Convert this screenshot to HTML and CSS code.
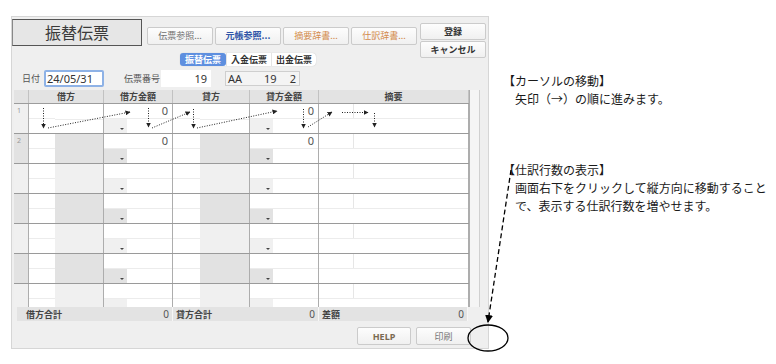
FILE: index.html
```html
<!DOCTYPE html>
<html lang="ja">
<head>
  <meta charset="UTF-8" />
  <title>振替伝票</title>
  <link rel="stylesheet" href="styles.css">
</head>
<body>
  <div class="page">
    <div class="window">
      <div class="top">
        <div class="top-main">
          <div class="title-row">
            <div class="title">振替伝票</div>
            <div class="ref-btns">
              <button class="btn ref gray">伝票参照...</button>
              <button class="btn ref blue">元帳参照...</button>
              <button class="btn ref orange">摘要辞書...</button>
              <button class="btn ref orange">仕訳辞書...</button>
            </div>
          </div>
          <div class="tabs">
            <span class="tab active">振替伝票</span>
            <span class="tab">入金伝票</span>
            <span class="tab">出金伝票</span>
          </div>
        </div>
        <div class="side-btns">
          <button class="btn side">登録</button>
          <button class="btn side">キャンセル</button>
        </div>
      </div>

      <div class="form-row">
        <span class="lbl lbl-date">日付</span>
        <div class="field date">24/05/31</div>
        <span class="lbl lbl-no">伝票番号</span>
        <div class="field no">19</div>
        <div class="field code"><span>AA</span><span class="c2">19</span><span class="c3">2</span></div>
      </div>

      <div class="grid-wrap">
        <div class="grid">
          <div class="thead cols">
            <div class="th"></div>
            <div class="th">借方</div>
            <div class="th">借方金額</div>
            <div class="th">貸方</div>
            <div class="th">貸方金額</div>
            <div class="th">摘要</div>
          </div>
          <div class="tbody" id="tbody"></div>
          <div class="tfoot">
            <div class="sum"><b>借方合計</b><span>0</span></div>
            <div class="sum"><b>貸方合計</b><span>0</span></div>
            <div class="sum"><b>差額</b><span>0</span></div>
          </div>
        </div>
        <div class="gutter"></div>
      </div>

      <div class="bottom-bar">
        <button class="btn foot help">HELP</button>
        <button class="btn foot">印刷</button>
      </div>
    </div>

    <div class="notes">
      <div class="note">
        <p>【カーソルの移動】</p>
        <p>　矢印（→）の順に進みます。</p>
      </div>
      <div class="note">
        <p>【仕訳行数の表示】</p>
        <p>　画面右下をクリックして縦方向に移動すること</p>
        <p>　で、表示する仕訳行数を増やせます。</p>
      </div>
    </div>
  </div>

  <svg class="callout" width="776" height="364" viewBox="0 0 776 364">
    <defs>
      <marker id="bigHead" markerWidth="8" markerHeight="10" refX="7" refY="5" orient="auto" markerUnits="userSpaceOnUse">
        <path d="M0,1 L8,5 L0,9 Z" fill="#000"/>
      </marker>
    </defs>
    <line x1="511" y1="170" x2="488" y2="322" stroke="#000" stroke-width="1.3" stroke-dasharray="5 3" marker-end="url(#bigHead)"/>
    <ellipse cx="488" cy="338" rx="20" ry="13" fill="none" stroke="#000" stroke-width="1.3"/>
  </svg>

  <script>
    const tbody = document.getElementById("tbody");

    const arrows = `
      <svg class="flow" width="455" height="29" viewBox="0 0 455 29">
        <defs>
          <marker id="tip" markerWidth="5" markerHeight="5" refX="4.5" refY="2.5" orient="auto" markerUnits="userSpaceOnUse">
            <path d="M0,0 L5,2.5 L0,5 Z" fill="#222"/>
          </marker>
        </defs>
        <g stroke="#222" stroke-width="1" stroke-dasharray="1 1.5" fill="none" marker-end="url(#tip)">
          <line x1="29.5" y1="4" x2="29.5" y2="24"/>
          <line x1="34" y1="24" x2="116" y2="8"/>
          <line x1="134.5" y1="4" x2="134.5" y2="23"/>
          <line x1="138" y1="24" x2="176" y2="8"/>
          <line x1="179.5" y1="5" x2="179.5" y2="24"/>
          <line x1="183" y1="24" x2="263" y2="7"/>
          <line x1="289.5" y1="5" x2="289.5" y2="24"/>
          <line x1="294" y1="23" x2="318" y2="8"/>
          <line x1="328" y1="8.5" x2="354" y2="8.5"/>
          <line x1="360.5" y1="9" x2="360.5" y2="23"/>
        </g>
      </svg>`;

    // build 7 journal rows (last one is cut off by the footer)
    for (let i = 1; i <= 7; i++) {
      const row = document.createElement("div");
      row.className = "row cols " + (i % 2 ? "odd" : "even") + (i === 1 ? " first" : "");
      const val = i <= 2 ? "0" : "";
      row.innerHTML = `
        <div class="num">${i <= 2 ? i : ""}</div>
        <div class="acct"><div class="w"><div class="sub"></div></div><div class="g"></div></div>
        <div class="amt"><div class="sub">${val}</div><div class="bot"><div class="drop"><i></i></div></div></div>
        <div class="acct cr"><div class="w"><div class="sub"></div></div><div class="g"></div></div>
        <div class="amt"><div class="sub">${val}</div><div class="bot"><div class="drop"><i></i></div></div></div>
        <div class="memo"><div class="sub"><div class="k"></div></div></div>
        ${i === 1 ? arrows : ""}
      `;
      tbody.appendChild(row);
    }
  </script>
</body>
</html>
```

FILE: styles.css
```css
body {
  margin: 0;
  background: #fff;
  font-family: "Noto Sans", "Noto Sans CJK JP", sans-serif;
  color: #333;
}

.page {
  display: flex;
  align-items: flex-start;
  padding: 16px 0 0 11px;
}

.window {
  box-sizing: border-box;
  width: 478px;
  height: 333px;
  border: 1px solid #d6d6d6;
  background: #efefef;
  display: flex;
  flex-direction: column;
}

/* header */
.top {
  display: flex;
  height: 48px;
}

.top-main {
  flex: 1;
}

.title-row {
  display: flex;
}

.title {
  box-sizing: border-box;
  width: 130px;
  height: 27px;
  margin-top: 2px;
  border: 1px solid #555;
  border-left-color: #888;
  background: #e6e6e6;
  text-align: center;
  font-family: "Noto Sans CJK JP", sans-serif;
  font-size: 16px;
  line-height: 25px;
  color: #3a3a3a;
}

.btn {
  box-sizing: border-box;
  padding: 0;
  border: 1px solid #cbcbcb;
  border-radius: 2px;
  background: linear-gradient(#fdfdfd, #f0f0f0);
  font-family: "Noto Sans CJK JP", sans-serif;
  font-size: 9px;
  color: #555;
  cursor: pointer;
}

.ref-btns {
  display: flex;
  gap: 2px;
  margin: 10px 0 0 5px;
}

.ref {
  width: 66px;
  height: 18px;
  line-height: 16px;
}

.ref.gray { color: #707070; }
.ref.blue { color: #2f55a8; font-weight: bold; }
.ref.orange { color: #d38a4a; }

.tabs {
  display: inline-flex;
  margin: 5px 0 0 168px;
  background: #fff;
  border-radius: 4px;
  box-shadow: 0 0 1px rgba(0,0,0,0.25);
  height: 13px;
}

.tab {
  padding: 0 4px;
  font-family: "Noto Sans CJK JP", sans-serif;
  font-size: 9px;
  font-weight: bold;
  line-height: 13px;
  color: #333;
  border-left: 1px solid #e4e4e4;
}

.tab.active {
  background: #5e8fdf;
  color: #fff;
  border-radius: 3px;
  border-left: none;
  padding: 0 5px;
}

.side-btns {
  display: flex;
  flex-direction: column;
  gap: 1px;
  width: 66px;
  margin: 6px 2px 0 0;
}

.side {
  height: 17px;
  font-weight: bold;
  color: #333;
}

/* voucher fields */
.form-row {
  display: flex;
  align-items: center;
  height: 17px;
  margin-top: 5px;
  font-family: "Noto Sans CJK JP", sans-serif;
  font-size: 9px;
  color: #555;
}

.lbl-date {
  margin-left: 10px;
  width: 22px;
}

.lbl-no {
  margin-left: 20px;
  width: 37px;
}

.field {
  box-sizing: border-box;
  height: 17px;
  background: #fff;
  font-family: "Noto Sans", sans-serif;
  font-size: 11px;
  line-height: 15px;
  color: #333;
}

.date {
  width: 60px;
  border: 2px solid #8eb2e6;
  border-radius: 2px;
  padding-left: 1px;
  line-height: 13px;
}

.no {
  width: 50px;
  text-align: right;
  padding: 1px 4px 0 0;
}

.code {
  display: flex;
  width: 75px;
  height: 15px;
  margin-left: 14px;
  border: 1px solid #cfcfcf;
  background: #f4f4f4;
  line-height: 13px;
  padding-left: 2px;
}

.code .c2 { margin-left: 22px; }
.code .c3 { margin-left: 13px; }

/* journal grid */
.grid-wrap {
  display: flex;
  height: 231px;
  margin: 3px 0 0 2px;
}

.grid {
  width: 455px;
  display: flex;
  flex-direction: column;
}

.cols {
  display: grid;
  grid-template-columns: 15px 75px 69px 77px 69px 150px;
}

.cols > div {
  box-sizing: border-box;
  border-right: 1px solid #adadad;
}

.thead {
  height: 14px;
  background: #e3e3e3;
  border-bottom: 1px solid #9c9c9c;
  box-sizing: border-box;
}

.th {
  font-family: "Noto Sans CJK JP", sans-serif;
  font-size: 9px;
  font-weight: bold;
  line-height: 13px;
  text-align: center;
  color: #444;
}

.cols > .th {
  border-right-color: #c2c2c2;
}

.tbody {
  height: 203px;
  overflow: hidden;
  background: #fff;
}

.row {
  position: relative;
  height: 30px;
  border-bottom: 1px solid #9a9a9a;
  box-sizing: border-box;
}

.row.odd { --alt: #f0f0f0; }
.row.even { --alt: #e2e2e2; }

.num {
  background: var(--alt);
  font-size: 7px;
  color: #999;
  padding: 2px 0 0 3px;
}

.sub {
  box-sizing: border-box;
  height: 15px;
  border-bottom: 1px solid #ececec;
}

.acct {
  display: flex;
}

.acct .w {
  width: 26px;
}

.acct.cr .w {
  width: 27px;
}

.acct .g {
  flex: 1;
  background: var(--alt);
}

.row.first .acct .g {
  background: #fff;
  border-bottom: 1px solid #ececec;
  height: 15px;
}

.amt {
  display: flex;
  flex-direction: column;
}

.amt .sub {
  text-align: right;
  padding-right: 4px;
  font-size: 11px;
  line-height: 14px;
  color: #555;
}

.amt .bot {
  flex: 1;
  display: flex;
}

.drop {
  width: 23px;
  background: var(--alt);
  display: flex;
  justify-content: flex-end;
  align-items: flex-end;
  padding: 0 3px 3px 0;
  box-sizing: border-box;
}

.drop i {
  width: 0;
  height: 0;
  border-left: 2px solid transparent;
  border-right: 2px solid transparent;
  border-top: 2px solid #444;
}

.memo .k {
  width: 34px;
  height: 14px;
  border-right: 1px solid #e6e6e6;
}

.flow {
  position: absolute;
  left: 0;
  top: 0;
  pointer-events: none;
}

.tfoot {
  display: grid;
  grid-template-columns: 156px 146px 149px;
  width: 451px;
  height: 14px;
  margin-left: 3px;
  background: #e3e3e3;
}

.sum {
  display: flex;
  justify-content: space-between;
  align-items: center;
  padding: 0 3px 0 9px;
  border-right: 1px solid #f6f6f6;
  font-family: "Noto Sans CJK JP", sans-serif;
  font-size: 9px;
  color: #444;
}

.sum + .sum {
  padding-left: 3px;
}

.sum span {
  font-family: "Noto Sans", sans-serif;
  font-size: 10px;
  color: #555;
}

.gutter {
  width: 11px;
  height: 217px;
  box-sizing: border-box;
  border-left: 1px solid #adadad;
  border-right: 1px solid #d0d0d0;
  background: #f5f5f5;
}

.bottom-bar {
  display: flex;
  justify-content: flex-end;
  gap: 5px;
  margin: 6px 17px 0 0;
}

.foot {
  width: 55px;
  height: 18px;
  color: #777;
  font-size: 9px;
}

.foot.help {
  font-family: "Noto Sans", sans-serif;
  color: #7a6a52;
  font-weight: bold;
  width: 54px;
}

/* annotations */
.notes {
  margin: 56px 0 0 14px;
  font-family: "Noto Sans CJK JP", serif;
  font-size: 12px;
  line-height: 18px;
  color: #1a1a1a;
}

.note p {
  margin: 0;
  white-space: pre;
}

.note + .note {
  margin-top: 53px;
}

.callout {
  position: absolute;
  left: 0;
  top: 0;
  pointer-events: none;
}
```
